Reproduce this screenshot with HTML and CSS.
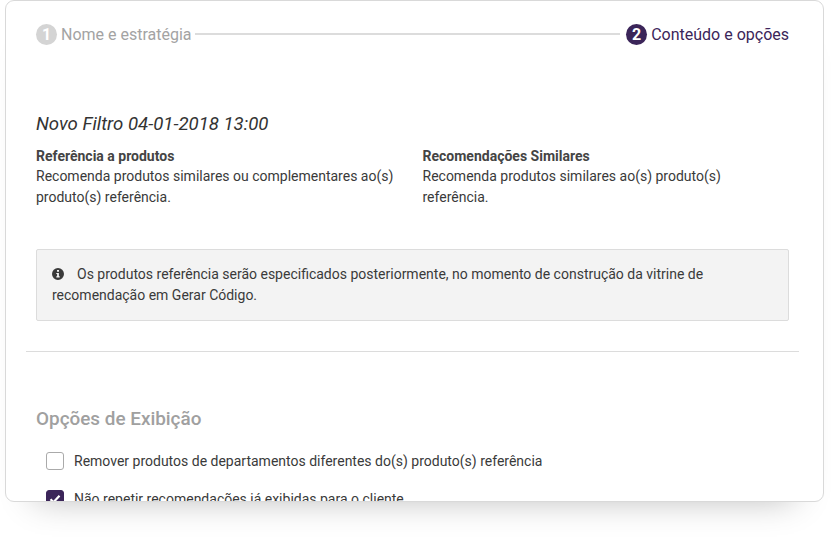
FILE: index.html
```html
<!DOCTYPE html>
<html lang="pt">
<head>
<meta charset="utf-8">
<title>Novo Filtro</title>
<link rel="stylesheet" href="styles.css">
</head>
<body>
<main class="card">
  <div class="section">
    <ol class="steps">
      <li class="step step-done"><span class="step-num">1</span><span>Nome e estratégia</span></li>
      <li class="step-line" aria-hidden="true"></li>
      <li class="step step-active"><span class="step-num">2</span><span>Conteúdo e opções</span></li>
    </ol>
    <h1 class="title">Novo Filtro 04-01-2018 13:00</h1>
    <div class="cols">
      <div class="col"><strong>Referência a produtos</strong>Recomenda produtos similares ou complementares ao(s) produto(s) referência.</div>
      <div class="col"><strong>Recomendações Similares</strong>Recomenda produtos similares ao(s) produto(s) referência.</div>
    </div>
    <div class="notice">
      <svg class="notice-icon" viewBox="0 0 12 12" width="12" height="12" aria-hidden="true"><path fill="#3a3a3a" fill-rule="evenodd" d="M6 0a6 6 0 1 1 0 12A6 6 0 0 1 6 0zM5 2v1.8h2V2zM4.3 5v1.1h.8v2.2h-.8v1.1h3.4V8.3h-.8V5z"/></svg>Os produtos referência serão especificados posteriormente, no momento de construção da vitrine de recomendação em Gerar Código.
    </div>
  </div>
  <hr class="rule">
  <div class="section">
    <h2 class="options-title">Opções de Exibição</h2>
    <label class="option"><span class="box"></span>Remover produtos de departamentos diferentes do(s) produto(s) referência</label>
    <label class="option"><span class="box box-on"><svg viewBox="0 0 18 18" width="18" height="18" aria-hidden="true"><path d="M4.5 9.2l3 3 6-6.4" fill="none" stroke="#fff" stroke-width="2.2"/></svg></span>Não repetir recomendações já exibidas para o cliente</label>
  </div>
</main>
</body>
</html>
```
FILE: styles.css
```css
* { box-sizing: border-box; }
html, body { margin: 0; padding: 0; height: 547px; overflow: hidden; background: #fff; }
body { font-family: Roboto, "Liberation Sans", sans-serif; font-size: 14px; line-height: 21px; color: #3a3a3a; padding: 0 7px 0 5px; }
.card { height: 502px; overflow: hidden; background: #fff; border: 1px solid #d9d9d9; border-radius: 9px; padding: 0 24px 0 20px; box-shadow: 0 26px 34px -30px rgba(0,0,0,.3); }
.section { padding: 0 10px; }
.steps { list-style: none; margin: 0; padding: 22px 0 0; display: flex; align-items: center; height: 44px; font-size: 16px; }
.step { display: flex; align-items: center; gap: 4px; white-space: nowrap; }
.step-line { flex: 1; height: 2px; background: #dcdcdc; margin: 0 6px 0 3px; }
.step-num { width: 21px; height: 21px; border-radius: 50%; display: flex; align-items: center; justify-content: center; font-weight: 700; font-size: 16px; color: #fff; }
.step-done { color: #a3a3a3; }
.step-done .step-num { background: #d4d4d4; }
.step-active { color: #3b2559; }
.step-active .step-num { background: #3b2559; }
.title { margin: 67px 0 0; font-size: 18.6px; font-weight: 400; font-style: italic; line-height: 24px; color: #333; }
.cols { display: grid; grid-template-columns: 1fr 1fr; column-gap: 20px; margin-top: 11px; }
.col strong { display: block; font-weight: 700; line-height: 19px; color: #444; }
.notice { margin-top: 41px; padding: 14px 15px 14px; background: #f3f3f3; border: 1px solid #dcdcdc; border-radius: 2px; color: #3a3a3a; }
.notice-icon { margin-right: 13px; vertical-align: -1px; }
.rule { margin: 30px 0 0; border: 0; border-top: 1px solid #dcdcdc; }
.options-title { margin: 55px 0 0; font-size: 18.9px; font-weight: 500; line-height: 24px; color: #a0a0a0; }
.option { display: flex; align-items: center; gap: 10px; margin: 0 0 0 10px; height: 18px; color: #3a3a3a; }
.options-title + .option { margin-top: 21px; }
.option + .option { margin-top: 20px; }
.box { width: 18px; height: 18px; flex: none; border: 1px solid #aaa; border-radius: 3px; background: #fff; }
.box-on { background: #3b2559; border-color: #3b2559; display: flex; align-items: center; justify-content: center; }
.box-on svg { flex: none; }
```
